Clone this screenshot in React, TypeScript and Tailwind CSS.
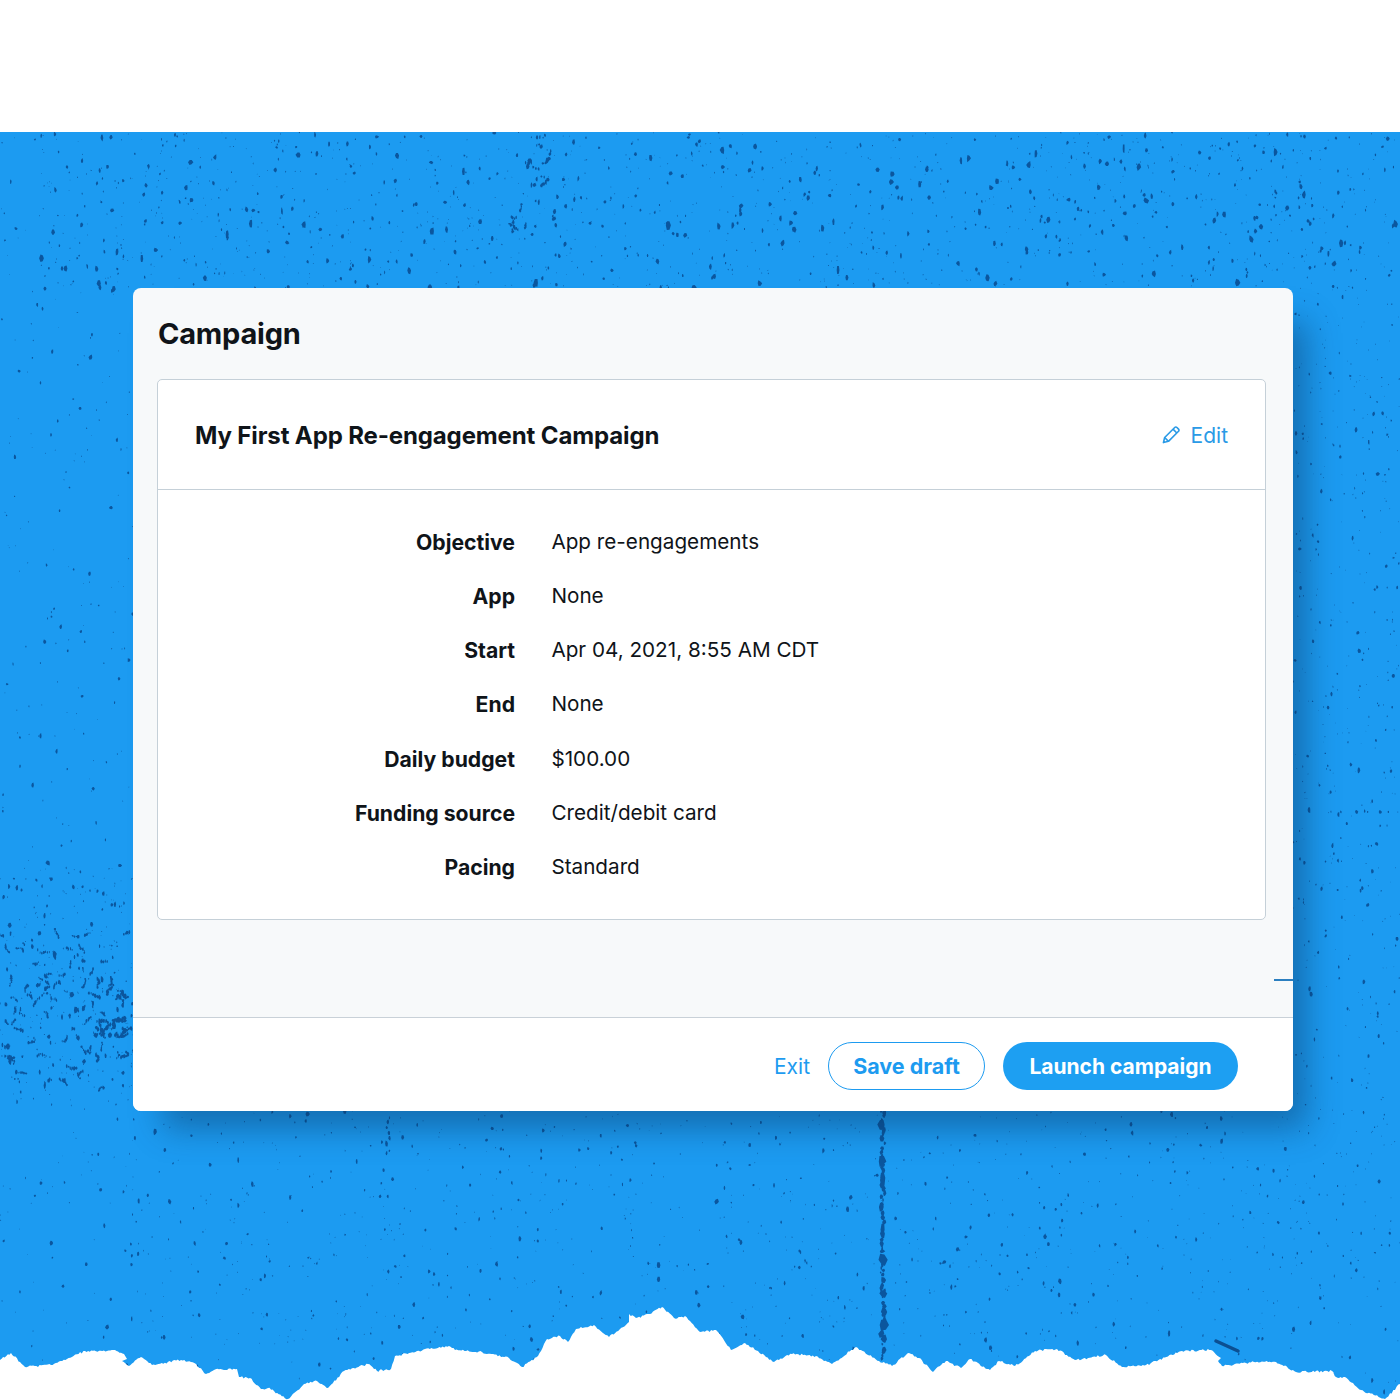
import React from "react";

function rng(seed: number) {
  let s = seed >>> 0;
  return () => {
    s = (s + 0x6d2b79f5) >>> 0;
    let t = s;
    t = Math.imul(t ^ (t >>> 15), t | 1);
    t ^= t + Math.imul(t ^ (t >>> 7), t | 61);
    return ((t ^ (t >>> 14)) >>> 0) / 4294967296;
  };
}

const EDGE: [number, number][] = [
  [0,1360],[11,1353],[20,1362],[25,1367],[51,1365],[67,1359],[85,1351],[107,1351],[115,1350],[124,1354],[127,1359],[122,1361],[129,1366],[141,1357],[152,1365],[181,1360],[196,1364],[206,1374],[214,1370],[237,1369],[239,1377],[250,1378],[261,1389],[268,1388],[288,1399],[304,1384],[317,1381],[328,1388],[344,1371],[368,1364],[377,1371],[391,1369],[395,1356],[417,1351],[449,1346],[455,1350],[482,1352],[509,1358],[522,1367],[538,1356],[547,1339],[560,1336],[568,1342],[576,1329],[594,1325],[609,1337],[629,1322],[629,1314],[636,1318],[650,1314],[662,1307],[674,1318],[685,1316],[700,1332],[716,1330],[731,1350],[745,1343],[758,1351],[774,1362],[792,1354],[816,1356],[832,1364],[856,1347],[879,1361],[892,1366],[908,1353],[919,1358],[933,1372],[946,1361],[961,1368],[970,1359],[990,1370],[999,1361],[1015,1366],[1035,1351],[1057,1349],[1075,1360],[1106,1355],[1122,1367],[1146,1365],[1182,1351],[1211,1350],[1221,1358],[1218,1361],[1222,1366],[1254,1362],[1276,1362],[1296,1372],[1332,1371],[1336,1377],[1345,1377],[1361,1390],[1385,1399],[1400,1384],
];

function tornPath() {
  const r = rng(77);
  const d = "M0 132 L1400 132 L1400 " + EDGE[EDGE.length - 1][1];
  const pts: string[] = [];
  for (let i = 0; i < EDGE.length - 1; i++) {
    const [x0, y0] = EDGE[i];
    const [x1, y1] = EDGE[i + 1];
    const n = Math.max(1, Math.round((x1 - x0) / 1.6));
    for (let k = 0; k < n; k++) {
      const t = k / n;
      const j = k === 0 ? 0 : (r() - 0.5) * 2.2;
      pts.push(`L${(x0 + (x1 - x0) * t).toFixed(1)} ${(y0 + (y1 - y0) * t + j).toFixed(1)}`);
    }
  }
  const last = EDGE[EDGE.length - 1];
  pts.push(`L${last[0]} ${last[1]}`);
  return d + " " + pts.reverse().join(" ") + " L0 1360 Z";
}

function blob(r: () => number, x: number, y: number, size: number) {
  const sx = size * (0.5 + r() * 0.5);
  const sy = size * (0.8 + r() * 0.8);
  let d = "";
  for (let a = 0; a < 6; a++) {
    const ang = (a / 6) * Math.PI * 2;
    const k = 0.7 + r() * 0.6;
    d += `${a === 0 ? "M" : "L"}${(x + Math.cos(ang) * sx * k).toFixed(1)} ${(y + Math.sin(ang) * sy * k).toFixed(1)}`;
  }
  return d + "Z";
}

function specks(count: number, seed: number, x0: number, x1: number, y0: number, y1: number, maxR: number) {
  const r = rng(seed);
  let d = "";
  for (let i = 0; i < count; i++) {
    const x = x0 + (x1 - x0) * r();
    const y = y0 + (y1 - y0) * r();
    const p = r();
    d += blob(r, x, y, 0.45 + p * p * p * maxR);
  }
  return d;
}

function worms(count: number, seed: number, x0: number, x1: number, y0: number, y1: number, len: number, size: number) {
  const r = rng(seed);
  let d = "";
  for (let i = 0; i < count; i++) {
    let x = x0 + (x1 - x0) * r();
    let y = y0 + (y1 - y0) * r();
    let ang = r() * Math.PI * 2;
    const n = 2 + Math.floor(r() * len);
    for (let k = 0; k < n; k++) {
      d += blob(r, x, y, size * (0.6 + r() * 0.6));
      ang += (r() - 0.5) * 1.8;
      x += Math.cos(ang) * size * 1.4;
      y += Math.sin(ang) * size * 1.4;
    }
  }
  return d;
}

function strand(seed: number, x: number, y0: number, y1: number, size: number, step: number) {
  const r = rng(seed);
  let d = "";
  for (let y = y0; y < y1; y += step * (0.5 + r())) {
    const fat = r() > 0.72 ? 1.7 : 1;
    d += blob(r, x + (r() - 0.5) * 3.5, y, size * fat * (0.6 + r() * 0.6));
  }
  return d;
}

const torn = tornPath();
const speckLayer =
  specks(3400, 3, 0, 1400, 132, 1400, 1.6) +
  specks(1100, 11, 40, 1400, 132, 290, 2.4) +
  specks(350, 12, 1295, 1400, 290, 1300, 1.4) +
  specks(500, 13, 130, 1300, 1112, 1340, 1.4) +
  specks(220, 21, 0, 133, 860, 1110, 2) +
  worms(70, 22, 0, 133, 930, 1090, 5, 1.4) +
  worms(18, 26, 95, 133, 985, 1040, 6, 1.7) +
  strand(23, 883, 1110, 1362, 2.4, 4) +
  strand(24, 388, 1118, 1156, 1.6, 5) +
  strand(25, 632, 1210, 1260, 0.7, 7) +
  worms(10, 27, 525, 555, 135, 225, 4, 2) +
  worms(6, 28, 505, 535, 205, 240, 4, 1.5);

const rows = [
  ["Objective", "App re-engagements"],
  ["App", "None"],
  ["Start", "Apr 04, 2021, 8:55 AM CDT"],
  ["End", "None"],
  ["Daily budget", "$100.00"],
  ["Funding source", "Credit/debit card"],
  ["Pacing", "Standard"],
];

export default function App() {
  return (
    <div className="relative h-[1400px] w-[1400px] overflow-hidden bg-white font-['Inter',sans-serif] text-[#0f1419]">
      <svg className="absolute left-0 top-0" width="1400" height="1400" viewBox="0 0 1400 1400">
        <defs>
          <clipPath id="paper">
            <path d={torn} />
          </clipPath>
        </defs>
        <path d={torn} fill="#1c9bf1" />
        <g clipPath="url(#paper)">
          <path d={speckLayer} fill="#0b569e" />
          <path d="M1216 1341 L1238 1351" stroke="#0b4f92" strokeWidth="3.5" strokeLinecap="round" />
        </g>
      </svg>

      <div className="relative pl-[133px] pt-[288px]">
        <div className="relative flex h-[823px] w-[1160px] flex-col rounded-lg bg-[#f7f9fa] shadow-[22px_26px_30px_-8px_rgba(10,50,90,0.42)]">
          <div className="flex-1 px-6">
            <h1 className="pl-px pt-[27px] text-[29px] font-bold leading-[38px] tracking-[-0.22px]">Campaign</h1>
            <div className="mt-[26px] h-[541px] w-[1109px] rounded-[5px] border border-[#c5d0d8] bg-white">
              <div className="flex h-[110px] items-center justify-between border-b border-[#c5d0d8] px-[37px] pt-[2px]">
                <h2 className="text-[24px] font-bold leading-8 tracking-[-0.13px]">My First App Re-engagement Campaign</h2>
                <div className="flex items-center gap-[10px] text-[#2a9ae6]">
                  <svg className="-mt-[2px]" width="19" height="19" viewBox="0 0 20 20" fill="none" stroke="currentColor" strokeWidth="1.7" strokeLinejoin="round">
                    <path d="M1.5 18.5 L2.8 13.2 L13.4 2.6 A1.6 1.6 0 0 1 15.7 2.6 L17.4 4.3 A1.6 1.6 0 0 1 17.4 6.6 L6.8 17.2 Z" />
                    <path d="M11.6 4.4 L15.6 8.4 M2.8 13.2 L6.8 17.2" />
                  </svg>
                  <span className="text-[21px] leading-7">Edit</span>
                </div>
              </div>
              <div className="flex flex-col gap-[26.2px] pt-[37.8px]">
                {rows.map(([k, v]) => (
                  <div key={k} className="flex h-7 items-center text-[20.7px] leading-7">
                    <div className="w-[357px] text-right text-[21.2px] font-bold">{k}</div>
                    <div className="ml-[36.4px]">{v}</div>
                  </div>
                ))}
              </div>
            </div>
          </div>
          <div className="absolute right-0 top-[691px] h-[2px] w-[19px] bg-[#2b7fc0]" />
          <div className="flex h-[94px] items-center justify-end gap-[18px] rounded-b-lg border-t border-[#c9d1d8] bg-white pr-[55px] pt-[3px]">
            <span className="pt-px text-[21px] leading-7 text-[#1d9bf0]">Exit</span>
            <button className="h-12 w-[157px] rounded-full border border-[#1d9bf0] bg-white text-[21.5px] font-bold text-[#1d9bf0]">Save draft</button>
            <button className="h-12 w-[235px] rounded-full bg-[#1d9ff2] pt-px text-[21px] font-bold text-white">Launch campaign</button>
          </div>
        </div>
      </div>
    </div>
  );
}
